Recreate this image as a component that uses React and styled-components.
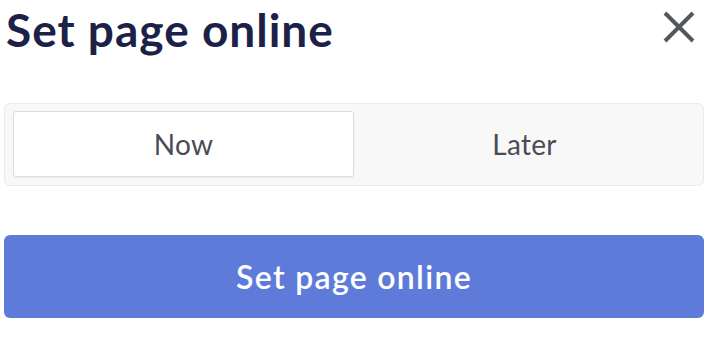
import React, { useState } from "react";
import styled, { createGlobalStyle } from "styled-components";

const Global = createGlobalStyle`
  html, body { margin: 0; padding: 0; background: #fff; }
  body { font-family: Lato, "Noto Sans", sans-serif; -webkit-font-smoothing: antialiased; }
  * { box-sizing: border-box; }
`;

const Dialog = styled.div`
  width: 724px;
  padding: 0 20px 0 4px;
  display: flex;
  flex-direction: column;
`;

const Header = styled.div`
  display: flex;
  justify-content: space-between;
  align-items: flex-start;
  height: 60px;
`;

const Title = styled.h1`
  margin: 0;
  padding: 4px 0 0 2px;
  font-family: Lato, sans-serif;
  font-weight: 700;
  font-size: 46px;
  line-height: 52px;
  letter-spacing: 1px;
  color: #1c2147;
`;

const CloseButton = styled.button`
  border: 0;
  background: none;
  padding: 0;
  margin: 11px 9px 0 0;
  width: 32px;
  height: 32px;
  display: flex;
  cursor: pointer;
`;

const Segmented = styled.div`
  margin-top: 43px;
  display: grid;
  grid-template-columns: 1fr 1fr;
  padding: 7px 8px 8px;
  background: #f8f8f8;
  border: 1px solid #e9eaec;
  border-radius: 6px;
`;

const Segment = styled.button`
  height: 66px;
  border-radius: 3px;
  border: 1px solid ${(p) => (p.$active ? "#dcdde0" : "transparent")};
  background: ${(p) => (p.$active ? "#fff" : "transparent")};
  box-shadow: ${(p) => (p.$active ? "0 1px 2px rgba(0,0,0,0.06)" : "none")};
  font-family: Lato, sans-serif;
  font-size: 28px;
  font-weight: 400;
  letter-spacing: 0.3px;
  color: #4a4c55;
  cursor: pointer;
  padding: 0;
`;

const Primary = styled.button`
  margin-top: 49px;
  height: 83px;
  border: 0;
  border-radius: 6px;
  background: #5e7bd9;
  color: #fff;
  font-family: Lato, sans-serif;
  font-size: 32px;
  font-weight: 600;
  letter-spacing: 1.3px;
  cursor: pointer;
`;

export default function App() {
  const [when, setWhen] = useState("now");
  return (
    <>
      <Global />
      <Dialog>
        <Header>
          <Title>Set page online</Title>
          <CloseButton aria-label="Close">
            <svg width="32" height="32" viewBox="0 0 32 32">
              <path d="M2 2 L30 30 M30 2 L2 30" stroke="#55575e" strokeWidth="4" strokeLinecap="butt" />
            </svg>
          </CloseButton>
        </Header>
        <Segmented>
          <Segment $active={when === "now"} onClick={() => setWhen("now")}>Now</Segment>
          <Segment $active={when === "later"} onClick={() => setWhen("later")}>Later</Segment>
        </Segmented>
        <Primary>Set page online</Primary>
      </Dialog>
    </>
  );
}
